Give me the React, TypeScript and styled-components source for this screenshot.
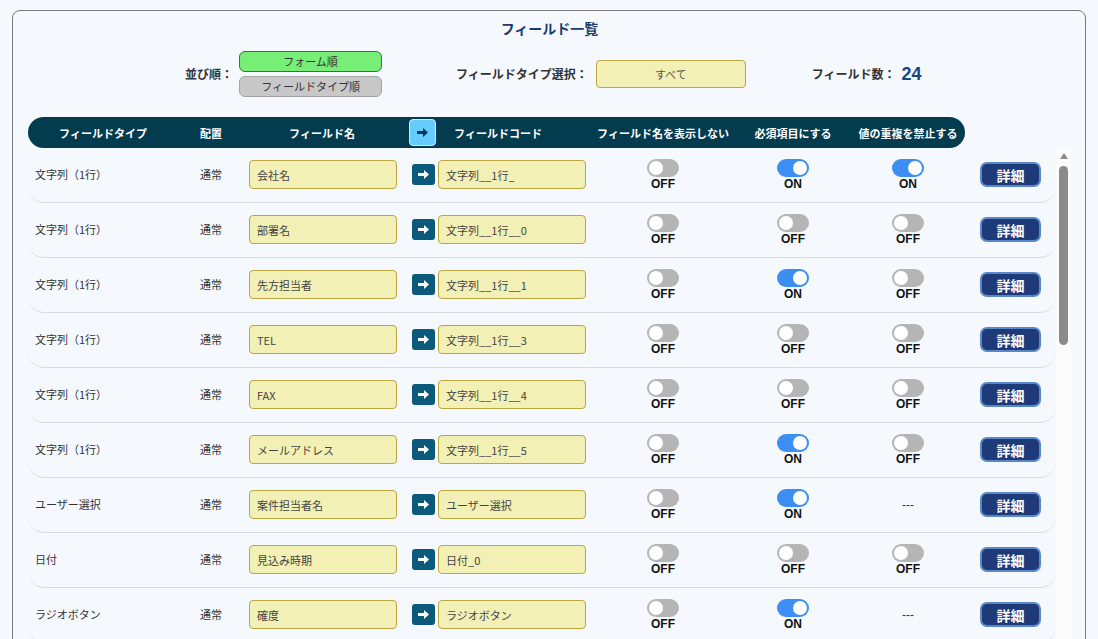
import React from "react";
import styled, { createGlobalStyle } from "styled-components";

const GlobalStyle = createGlobalStyle`
  html, body { margin: 0; padding: 0; overflow: hidden; background: #f5f9fd; }
  body { font-family: "Noto Sans CJK JP", "Noto Sans", sans-serif; color: #333; }
  * { box-sizing: border-box; }
`;

const Page = styled.div`
  padding: 10px 12px 0;
  height: 639px;
`;

const Panel = styled.section`
  border: 1px solid #7a7a7a;
  border-radius: 8px;
  background: #f5f9fd;
  padding: 7px 14px 0 15px;
  height: 720px;
`;

const Title = styled.h1`
  margin: 0;
  text-align: center;
  font-size: 14px;
  line-height: 20px;
  font-weight: 700;
  color: #1b3c6e;
`;

const Controls = styled.div`
  margin-top: 13px;
  padding-left: 157px;
  display: flex;
  align-items: center;
  height: 46px;
`;

const Group = styled.div<{ $ml?: number }>`
  display: flex;
  align-items: center;
  margin-left: ${(p) => p.$ml ?? 0}px;
`;

const Label = styled.span`
  font-size: 12px;
  font-weight: 700;
  line-height: 16px;
  color: #333;
  white-space: nowrap;
`;

const SortStack = styled.div`
  display: flex;
  flex-direction: column;
  gap: 4px;
  margin-left: 6px;
`;

const SortButton = styled.button<{ $active?: boolean }>`
  width: 143px;
  height: 21px;
  border-radius: 6px;
  border: 1px solid ${(p) => (p.$active ? "#2e7d2e" : "#a3a3a3")};
  background: ${(p) => (p.$active ? "#77ee77" : "#c8c8c8")};
  color: #333;
  font-family: "Noto Sans CJK JP", sans-serif;
  font-size: 11px;
  line-height: 1;
  padding: 0;
  display: flex;
  align-items: center;
  justify-content: center;
`;

const SelectBox = styled.div`
  margin-left: 8px;
  width: 150px;
  height: 28px;
  background: #f2f0b4;
  border: 1px solid #bda544;
  border-radius: 4px;
  display: flex;
  align-items: center;
  justify-content: center;
  font-size: 11px;
  color: #555;
`;

const Count = styled.span`
  margin-left: 6px;
  font-family: "Liberation Sans", Arial, sans-serif;
  font-size: 18px;
  font-weight: 700;
  color: #1a4585;
  line-height: 20px;
`;

const Header = styled.div`
  margin-top: 20px;
  width: 937px;
  height: 31px;
  border-radius: 16px;
  background: #033b4f;
  display: flex;
  align-items: center;
`;

const HeadCell = styled.div<{ $w: number }>`
  width: ${(p) => p.$w}px;
  flex: none;
  display: flex;
  justify-content: center;
  color: #fff;
  font-size: 11px;
  font-weight: 700;
  line-height: 14px;
  white-space: nowrap;
`;

const HeadArrow = styled.button`
  width: 27px;
  height: 27px;
  padding: 0;
  border-radius: 4px;
  border: 1px solid #c9ecff;
  background: #66ccff;
  display: flex;
  align-items: center;
  justify-content: center;
`;

const Body = styled.div`
  display: flex;
  width: 1043px;
  height: 500px;
`;

const List = styled.div`
  width: 1028px;
  height: 100%;
  overflow: hidden;
`;

const Rail = styled.div`
  width: 15px;
  height: 100%;
  background: #fbfbfb;
  display: flex;
  flex-direction: column;
  align-items: center;
`;

const RailArrow = styled.span`
  margin-top: 5px;
  width: 0;
  height: 0;
  border-left: 4px solid transparent;
  border-right: 4px solid transparent;
  border-bottom: 6px solid #8b8b8b;
`;

const Thumb = styled.div`
  margin-top: 7px;
  width: 9px;
  height: 179px;
  border-radius: 5px;
  background: #8b8b8b;
`;

const Row = styled.div`
  display: grid;
  grid-template-columns: 150px 66px 164px 30px 148px 154px 106px 124px 86px;
  width: 1028px;
  height: 55px;
  align-items: center;
  border-bottom: 1px solid #dadde0;
  border-radius: 0 0 16px 16px;
`;

const TypeCell = styled.div`
  padding-left: 7px;
  font-size: 11px;
  line-height: 14px;
  color: #333;
  white-space: nowrap;
  margin-top: -2px;
`;

const PlaceCell = styled.div`
  text-align: center;
  font-size: 11px;
  line-height: 14px;
  color: #333;
  margin-top: -2px;
`;

const InputCell = styled.div<{ $pl?: number }>`
  padding-left: ${(p) => p.$pl ?? 0}px;
  display: flex;
  align-items: center;
  margin-top: -1px;
`;

const TextInput = styled.input`
  width: 148px;
  height: 29px;
  background: #f2f0b4;
  border: 1px solid #bda544;
  border-radius: 4px;
  padding: 0 7px;
  font-family: "Noto Sans CJK JP", sans-serif;
  font-size: 11px;
  color: #444;
  outline: none;
`;

const ArrowButton = styled.button`
  width: 23px;
  height: 21px;
  padding: 0;
  border: none;
  border-radius: 3px;
  background: #0c5a7b;
  display: flex;
  align-items: center;
  justify-content: center;
`;

const ToggleCell = styled.div`
  display: flex;
  flex-direction: column;
  align-items: center;
  margin-top: -1px;
`;

const Track = styled.div<{ $on: boolean }>`
  width: 32px;
  height: 18px;
  border-radius: 9px;
  background: ${(p) => (p.$on ? "#3d8ef2" : "#b5b5b5")};
  display: flex;
  align-items: center;
  justify-content: ${(p) => (p.$on ? "flex-end" : "flex-start")};
  padding: 0 2px;
`;

const Knob = styled.span`
  width: 14px;
  height: 14px;
  border-radius: 50%;
  background: #fff;
`;

const ToggleLabel = styled.span`
  font-family: "Liberation Sans", Arial, sans-serif;
  font-size: 12px;
  font-weight: 700;
  line-height: 14px;
  color: #111;
`;

const Dash = styled.span`
  font-family: "Liberation Sans", Arial, sans-serif;
  font-size: 12px;
  color: #333;
`;

const DetailCell = styled.div`
  padding-left: 10px;
  display: flex;
  align-items: center;
  margin-top: -1px;
`;

const DetailButton = styled.button`
  width: 61px;
  height: 25px;
  padding: 0;
  border-radius: 7px;
  border: 2px solid #5a87c7;
  background: #1e3a78;
  color: #fff;
  font-family: "Noto Sans CJK JP", sans-serif;
  font-size: 14px;
  font-weight: 700;
  line-height: 1;
  display: flex;
  align-items: center;
  justify-content: center;
`;

const Arrow = ({ color }: { color: string }) => (
  <svg width="11" height="9" viewBox="0 0 11 9" aria-hidden>
    <path d="M0 3h6V0l5 4.5L6 9V6H0z" fill={color} />
  </svg>
);

type Flag = boolean | null;
type Field = { type: string; name: string; code: string; hide: Flag; req: Flag; uniq: Flag };

const fields: Field[] = [
  { type: "文字列（1行）", name: "会社名", code: "文字列__1行_", hide: false, req: true, uniq: true },
  { type: "文字列（1行）", name: "部署名", code: "文字列__1行__0", hide: false, req: false, uniq: false },
  { type: "文字列（1行）", name: "先方担当者", code: "文字列__1行__1", hide: false, req: true, uniq: false },
  { type: "文字列（1行）", name: "TEL", code: "文字列__1行__3", hide: false, req: false, uniq: false },
  { type: "文字列（1行）", name: "FAX", code: "文字列__1行__4", hide: false, req: false, uniq: false },
  { type: "文字列（1行）", name: "メールアドレス", code: "文字列__1行__5", hide: false, req: true, uniq: false },
  { type: "ユーザー選択", name: "案件担当者名", code: "ユーザー選択", hide: false, req: true, uniq: null },
  { type: "日付", name: "見込み時期", code: "日付_0", hide: false, req: false, uniq: false },
  { type: "ラジオボタン", name: "確度", code: "ラジオボタン", hide: false, req: true, uniq: null },
  { type: "数値", name: "見込み金額", code: "数値", hide: false, req: false, uniq: false },
  { type: "ドロップダウン", name: "商談ステータス", code: "ドロップダウン", hide: false, req: false, uniq: null },
  { type: "日付", name: "受注日", code: "日付_1", hide: false, req: false, uniq: false },
  { type: "数値", name: "受注金額", code: "数値_0", hide: false, req: false, uniq: false },
  { type: "文字列（複数行）", name: "備考", code: "文字列__複数行_", hide: false, req: false, uniq: null },
  { type: "チェックボックス", name: "提案資料", code: "チェックボックス", hide: false, req: false, uniq: null },
  { type: "文字列（1行）", name: "商品名", code: "文字列__1行__6", hide: false, req: false, uniq: false },
  { type: "数値", name: "数量", code: "数値_1", hide: false, req: false, uniq: false },
  { type: "数値", name: "単価", code: "数値_2", hide: false, req: false, uniq: false },
  { type: "計算", name: "小計", code: "計算", hide: false, req: null, uniq: null },
  { type: "添付ファイル", name: "見積書", code: "添付ファイル", hide: false, req: false, uniq: null },
  { type: "日時", name: "次回訪問日時", code: "日時", hide: false, req: false, uniq: false },
  { type: "リンク", name: "企業URL", code: "リンク", hide: false, req: false, uniq: false },
  { type: "作成者", name: "作成者", code: "作成者", hide: false, req: null, uniq: null },
  { type: "更新日時", name: "更新日時", code: "更新日時", hide: false, req: null, uniq: null },
];

const Toggle = ({ value }: { value: Flag }) =>
  value === null ? (
    <ToggleCell>
      <Dash>---</Dash>
    </ToggleCell>
  ) : (
    <ToggleCell>
      <Track $on={value}>
        <Knob />
      </Track>
      <ToggleLabel>{value ? "ON" : "OFF"}</ToggleLabel>
    </ToggleCell>
  );

export default function App() {
  return (
    <>
      <GlobalStyle />
      <Page>
        <Panel>
          <Title>フィールド一覧</Title>
          <Controls>
            <Group>
              <Label>並び順：</Label>
              <SortStack>
                <SortButton $active>フォーム順</SortButton>
                <SortButton>フィールドタイプ順</SortButton>
              </SortStack>
            </Group>
            <Group $ml={74}>
              <Label>フィールドタイプ選択：</Label>
              <SelectBox>すべて</SelectBox>
            </Group>
            <Group $ml={66}>
              <Label>フィールド数：</Label>
              <Count>24</Count>
            </Group>
          </Controls>
          <Header>
            <HeadCell $w={150}>フィールドタイプ</HeadCell>
            <HeadCell $w={66}>配置</HeadCell>
            <HeadCell $w={156}>フィールド名</HeadCell>
            <HeadCell $w={45}>
              <HeadArrow>
                <Arrow color="#0b3a50" />
              </HeadArrow>
            </HeadCell>
            <HeadCell $w={106}>フィールドコード</HeadCell>
            <HeadCell $w={42} />
            <HeadCell $w={140}>フィールド名を表示しない</HeadCell>
            <HeadCell $w={120}>必須項目にする</HeadCell>
            <HeadCell $w={110}>値の重複を禁止する</HeadCell>
          </Header>
          <Body>
            <List>
              {fields.map((f, i) => (
                <Row key={i}>
                  <TypeCell>{f.type}</TypeCell>
                  <PlaceCell>通常</PlaceCell>
                  <InputCell $pl={5}>
                    <TextInput readOnly value={f.name} />
                  </InputCell>
                  <InputCell $pl={4}>
                    <ArrowButton>
                      <Arrow color="#ffffff" />
                    </ArrowButton>
                  </InputCell>
                  <InputCell>
                    <TextInput readOnly value={f.code} />
                  </InputCell>
                  <Toggle value={f.hide} />
                  <Toggle value={f.req} />
                  <Toggle value={f.uniq} />
                  <DetailCell>
                    <DetailButton>詳細</DetailButton>
                  </DetailCell>
                </Row>
              ))}
            </List>
            <Rail>
              <RailArrow />
              <Thumb />
            </Rail>
          </Body>
        </Panel>
      </Page>
    </>
  );
}
